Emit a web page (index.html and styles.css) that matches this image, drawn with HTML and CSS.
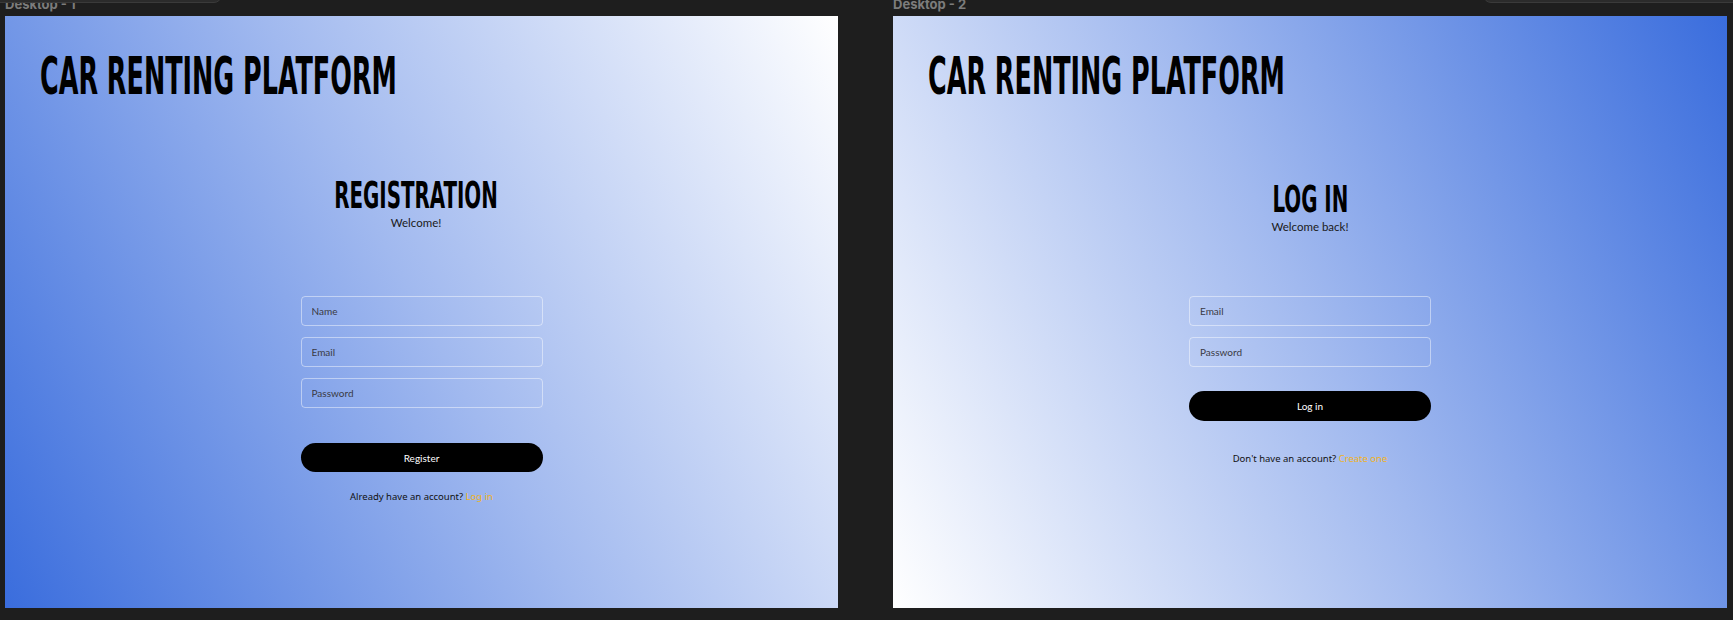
FILE: index.html
```html
<!DOCTYPE html>
<html lang="en">

<head>
    <meta charset="UTF-8">
    <meta name="viewport" content="width=device-width, initial-scale=1.0">
    <title>Car Renting Platform</title>
    <link rel="stylesheet" href="styles.css">
</head>

<body>

    <div class="panel panel-left"></div>
    <div class="panel panel-right"></div>

    <div class="canvas">
        <!-- Desktop 1: registration -->
        <div class="board">
            <div class="board-label">Desktop - 1</div>
            <div class="frame frame-register">
                <h1 class="brand"><span>Car Renting Platform</span></h1>

                <div class="form-box register-box">
                    <div class="form-head">
                        <h2 class="form-title"><span>Registration</span></h2>
                        <p class="welcome">Welcome!</p>
                    </div>

                    <div class="fields">
                        <input type="text" class="field" placeholder="Name">
                        <input type="email" class="field" placeholder="Email">
                        <input type="password" class="field" placeholder="Password">
                    </div>

                    <button class="btn">Register</button>
                    <p class="switch">Already have an account? <a href="#">Log in</a></p>
                </div>
            </div>
        </div>

        <!-- Desktop 2: log in -->
        <div class="board">
            <div class="board-label">Desktop - 2</div>
            <div class="frame frame-login">
                <h1 class="brand"><span>Car Renting Platform</span></h1>

                <div class="form-box login-box">
                    <div class="form-head">
                        <h2 class="form-title"><span>Log in</span></h2>
                        <p class="welcome">Welcome back!</p>
                    </div>

                    <div class="fields">
                        <input type="email" class="field" placeholder="Email">
                        <input type="password" class="field" placeholder="Password">
                    </div>

                    <button class="btn">Log in</button>
                    <p class="switch">Don't have an account? <a href="#">Create one</a></p>
                </div>
            </div>
        </div>
    </div>

</body>

</html>
```

FILE: styles.css
```css
/* Resetting styles */
* {
    margin: 0;
    padding: 0;
    box-sizing: border-box;
}

body {
    font-family: 'Lato', sans-serif;
    background-color: #1e1e1e;
    color: #000;
    height: 620px;
    overflow: hidden;
}

/* Floating editor panels at the top */
.panel {
    position: absolute;
    top: -10px;
    height: 13px;
    background-color: #2b2b2b;
    border: 1px solid #3a3a3a;
}

.panel-left {
    left: -2px;
    width: 224px;
    border-radius: 0 0 8px 0;
}

.panel-right {
    left: 1483px;
    width: 260px;
    border-radius: 0 0 0 8px;
}

/* Canvas with the two boards */
.canvas {
    display: flex;
    gap: 55px;
    padding-left: 5px;
}

.board {
    display: flex;
    flex-direction: column;
}

.board-label {
    height: 16px;
    line-height: 8px;
    font-size: 13px;
    font-weight: 700;
    color: #7c7c7c;
    font-family: 'Inter', sans-serif;
    overflow: hidden;
}

.frame {
    width: 833px;
    height: 592px;
    display: flex;
    flex-direction: column;
    padding: 35px 35px 0;
}

.frame-register {
    background: linear-gradient(62deg, #3a6ddd 0%, #a1b9ef 50%, #ffffff 100%);
}

.frame-login {
    width: 834px;
    background: linear-gradient(64deg, #ffffff 0%, #a1b9ef 50%, #3a6ddd 100%);
}

/* Condensed display type */
.brand,
.form-title {
    font-family: 'Liberation Sans Narrow', 'DejaVu Sans Condensed', sans-serif;
    font-weight: 700;
    text-transform: uppercase;
    line-height: 1;
    white-space: nowrap;
}

.brand span,
.form-title span {
    display: inline-block;
}

.brand {
    font-size: 51px;
}

.brand span {
    transform-origin: left center;
    transform: scaleX(0.555);
}

/* Form column */
.form-box {
    width: 242px;
    margin: 0 auto;
    display: flex;
    flex-direction: column;
    align-items: center;
}

.form-head {
    display: flex;
    flex-direction: column;
    align-items: center;
    margin-top: 74px;
}

.register-box .form-head {
    margin-right: 11px;
}

.form-title {
    font-size: 38px;
    text-align: center;
}

.form-title span {
    transform-origin: center center;
    transform: scaleX(0.58);
}

.welcome {
    font-size: 11.5px;
    margin-top: 2px;
    color: #1a1a1a;
}

.fields {
    width: 100%;
    display: flex;
    flex-direction: column;
    gap: 11px;
    margin-top: 67px;
}

.field {
    width: 100%;
    height: 30px;
    border: 1px solid rgba(255, 255, 255, 0.45);
    border-radius: 4px;
    background: transparent;
    padding: 0 10px;
    font-family: 'Lato', sans-serif;
    font-size: 10px;
    color: #333;
    outline: none;
}

.field::placeholder {
    color: #3a3a44;
}

.btn {
    width: 100%;
    height: 29px;
    margin-top: 35px;
    border: none;
    border-radius: 15px;
    background-color: #000;
    color: #fff;
    font-family: 'Lato', sans-serif;
    font-size: 10px;
}

.switch {
    font-family: 'Noto Sans', sans-serif;
    font-size: 9.5px;
    margin-top: 18px;
    color: #111;
}

.switch a {
    color: #f0b323;
    text-decoration: none;
}

/* Log in variant */
.login-box .form-head {
    margin-top: 78px;
}

.login-box .fields {
    margin-top: 63px;
}

.login-box .btn {
    height: 30px;
    margin-top: 24px;
}

.login-box .switch {
    margin-top: 31px;
}
```
